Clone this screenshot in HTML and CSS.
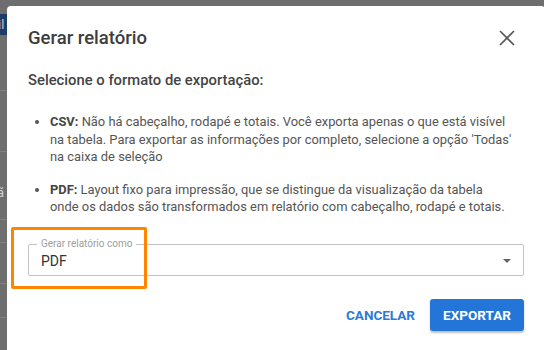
FILE: index.html
```html
<!DOCTYPE html>
<html lang="pt-BR">
<head>
    <meta charset="UTF-8">
    <title>Gerar relatório</title>
    <link rel="stylesheet" href="styles.css">
</head>
<body>
    <div class="page-edge">
        <div class="edge-band">il</div>
        <div class="edge-row r1"></div>
        <div class="edge-row r2"></div>
        <div class="edge-row r3"><span>ã</span></div>
        <div class="edge-row r4"></div>
        <div class="edge-row r5"></div>
        <div class="edge-row r6"></div>
    </div>
    <div class="dialog">
        <div class="dialog-header">
            <h2>Gerar relatório</h2>
            <button class="close" aria-label="Fechar">
                <svg width="16" height="16" viewBox="0 0 16 16">
                    <path d="M1 1 L15 15 M15 1 L1 15" stroke="#555" stroke-width="1.6" fill="none"/>
                </svg>
            </button>
        </div>
        <p class="subtitle">Selecione o formato de exportação:</p>
        <ul class="formats">
            <li><b>CSV:</b> Não há cabeçalho, rodapé e totais. Você exporta apenas o que está visível<br>na tabela. Para exportar as informações por completo, selecione a opção 'Todas'<br>na caixa de seleção</li>
            <li><b>PDF:</b> Layout fixo para impressão, que se distingue da visualização da tabela<br>onde os dados são transformados em relatório com cabeçalho, rodapé e totais.</li>
        </ul>
        <div class="field">
            <span class="field-label">Gerar relatório como</span>
            <span class="field-value">PDF</span>
            <span class="caret"></span>
            <span class="highlight"></span>
        </div>
        <div class="actions">
            <button class="btn-text">CANCELAR</button>
            <button class="btn-primary">EXPORTAR</button>
        </div>
    </div>
</body>
</html>
```

FILE: styles.css
```css
body {
    margin: 0;
    width: 544px;
    height: 350px;
    overflow: hidden;
    background: #6e6e6e;
    display: flex;
    font-family: Roboto, "Liberation Sans", sans-serif;
}
.page-edge {
    flex: 0 0 7px;
    overflow: hidden;
    padding-top: 14px;
}
.edge-band {
    height: 21px;
    background: #1d3c68;
    color: #b9c6d8;
    font-size: 13px;
    line-height: 21px;
    text-indent: -2px;
}
.edge-row {
    border-bottom: 1px solid #808080;
    box-sizing: border-box;
    color: #d0d0d0;
    font-size: 13px;
    text-indent: -3px;
}
.r1 { height: 56px; }
.r2 { height: 61px; }
.r3 { height: 68px; padding-top: 33px; }
.r4 { height: 23px; }
.r5 { height: 41px; }
.r6 { height: 34px; }
.dialog {
    flex: 0 0 538px;
    box-sizing: border-box;
    margin-top: 6px;
    background: #fff;
    border-radius: 4px 4px 0 0;
    padding: 20px 21px;
}
.dialog-header {
    display: flex;
    justify-content: space-between;
    align-items: center;
}
.dialog-header h2 {
    margin: 0;
    font-size: 18.5px;
    line-height: 24px;
    font-weight: 500;
    color: #3d3d3d;
}
.close {
    width: 34px;
    height: 24px;
    padding: 0;
    border: none;
    background: none;
    display: flex;
    align-items: center;
    justify-content: center;
}
.subtitle {
    margin: 20px 0 0;
    font-size: 14.8px;
    line-height: 20px;
    font-weight: 500;
    color: #444;
}
.formats {
    margin: 23px 0 0;
    padding-left: 22px;
    font-size: 12.9px;
    line-height: 17.5px;
    color: #555;
}
.formats li {
    white-space: nowrap;
}
.formats li + li {
    margin-top: 15px;
}
.formats b {
    color: #444;
}
.field {
    position: relative;
    margin-top: 28px;
    height: 32px;
    box-sizing: border-box;
    border: 1px solid #c4c4c4;
    border-radius: 2px;
    display: flex;
    align-items: center;
    padding: 0 12px;
}
.field-label {
    position: absolute;
    left: 8px;
    top: -7px;
    padding: 0 4px;
    background: #fff;
    font-size: 10px;
    line-height: 12px;
    color: #9e9e9e;
}
.field-value {
    flex: 1;
    font-size: 14px;
    color: #333;
    padding-top: 2px;
}
.caret {
    width: 0;
    height: 0;
    border-left: 4px solid transparent;
    border-right: 4px solid transparent;
    border-top: 4px solid #666;
    margin-top: 2px;
}
.highlight {
    position: absolute;
    left: -18px;
    top: -18px;
    width: 136px;
    height: 62px;
    box-sizing: border-box;
    border: 3px solid #ff8400;
    border-radius: 2px;
}
.actions {
    display: flex;
    justify-content: flex-end;
    align-items: center;
    margin-top: 23px;
}
.actions button {
    font-family: Roboto, "Liberation Sans", sans-serif;
    font-size: 13.5px;
    font-weight: 700;
    height: 32px;
    border: none;
    cursor: pointer;
}
.btn-text {
    background: none;
    color: #2a7ad6;
    padding: 0 8px;
    margin-right: 7px;
}
.btn-primary {
    width: 94px;
    background: #2475d8;
    color: #fff;
    border-radius: 3px;
    box-shadow: 0 2px 2px rgba(0, 0, 0, 0.25);
}
```
